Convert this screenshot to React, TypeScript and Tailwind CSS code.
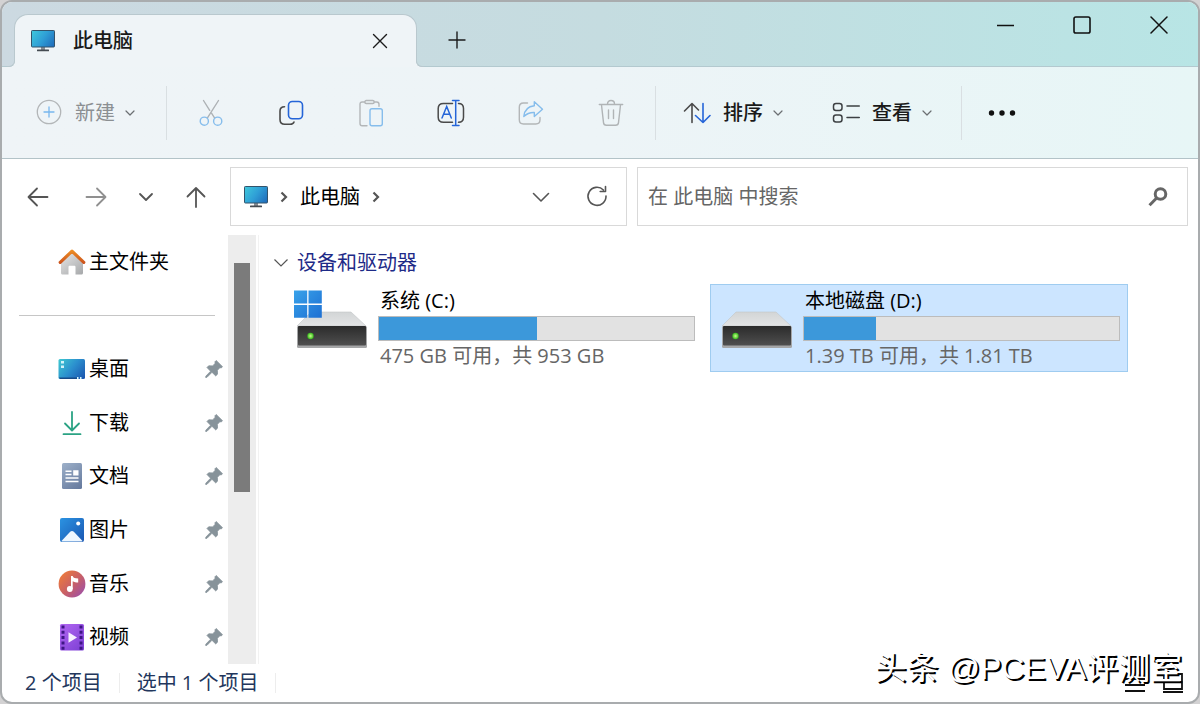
import type { ReactNode } from "react";

type IconProps = { className?: string };

const MonitorIcon = ({ className }: IconProps) => (
  <svg className={className} width="24" height="22" viewBox="0 0 24 22" fill="none">
    <defs>
      <linearGradient id="screen" x1="0" y1="0" x2="24" y2="17" gradientUnits="userSpaceOnUse">
        <stop stopColor="#40cbdc" />
        <stop offset="0.5" stopColor="#2f9fd6" />
        <stop offset="1" stopColor="#1d66b8" />
      </linearGradient>
    </defs>
    <rect x="10" y="17" width="4" height="3" fill="#8a8f94" />
    <rect x="6" y="19.5" width="12" height="1.8" rx="0.5" fill="#454b52" />
    <rect x="0.5" y="0.5" width="23" height="16.5" rx="0.8" fill="url(#screen)" stroke="#33536b" />
  </svg>
);

const ChevronDown = ({ className }: IconProps) => (
  <svg className={className} width="12" height="12" viewBox="0 0 12 12" fill="none" stroke="currentColor" strokeWidth="1.2" strokeLinecap="round" strokeLinejoin="round">
    <path d="M2 4l4 4 4-4" />
  </svg>
);

const ChevronRight = () => (
  <svg className="mx-[10px]" width="12" height="14" viewBox="0 0 12 14" fill="none" stroke="#555" strokeWidth="2.2">
    <path d="M3.500 2.500L8 7l-4.500 4.500" />
  </svg>
);

const NewIcon = () => (
  <svg width="28" height="28" viewBox="0 0 28 28" fill="none" strokeLinecap="round">
    <circle cx="14" cy="13" r="11.7" stroke="#b3b6b8" strokeWidth="1.3" />
    <path d="M14 8v10M9 13h10" stroke="#78b7ee" strokeWidth="1.3" />
  </svg>
);

const CutIcon = () => (
  <svg width="28" height="28" viewBox="0 0 28 28" fill="none" strokeWidth="1.4" strokeLinecap="round">
    <path d="M6.5 1.5l6.2 9.8M14.5 14.2l3.2 5M21.5 1.5L10.3 19.2" stroke="#aeb2b5" />
    <circle cx="7.3" cy="22.2" r="4.1" stroke="#86bdec" />
    <circle cx="20.7" cy="22.2" r="4.1" stroke="#86bdec" />
  </svg>
);

const CopyIcon = () => (
  <svg width="28" height="28" viewBox="0 0 28 28" fill="none" strokeWidth="1.6" strokeLinecap="round">
    <path d="M7.5 7.7C4.5 7.7 3 9.200 3 12v8.500c0 3.300 1.500 4.800 4.800 4.800h5.400c2 0 3.300-.9 3.800-2.300" stroke="#4a4a4a" />
    <rect x="11.500" y="2.500" width="14" height="17.300" rx="3.800" stroke="#2565d8" />
  </svg>
);

const PasteIcon = () => (
  <svg width="28" height="28" viewBox="0 0 28 28" fill="none" strokeWidth="1.4" strokeLinecap="round">
    <path d="M7.5 3H5.200C3.700 3 3 3.700 3 5.200v19.300c0 1.500.7 2.200 2.200 2.200H10M17.500 3h2.300c1.500 0 2.200.7 2.200 2.200v2" stroke="#b3b6b8" />
    <rect x="7.800" y="1.500" width="9.400" height="3" rx="1.500" stroke="#b3b6b8" />
    <rect x="13" y="9.700" width="12.300" height="17" rx="2" stroke="#86bdec" />
  </svg>
);

const RenameIcon = () => (
  <svg width="28" height="28" viewBox="0 0 28 28" fill="none" strokeWidth="1.5" strokeLinecap="round">
    <path d="M15.500 4.500H6.500C3 4.500 1.200 6.200 1.200 9.500v8.800c0 3.300 1.800 5 5.300 5h9M21.500 4.500c3.300 0 5 1.700 5 5v8.800c0 3.300-1.700 5-5 5" stroke="#4a4a4a" />
    <path d="M5 19l4.700-11.500L14.300 19M6.600 15.300h6.200M15.500 1.500h6.500M15.500 26.500h6.500M18.700 1.500v25" stroke="#2565d8" />
  </svg>
);

const ShareIcon = () => (
  <svg width="28" height="28" viewBox="0 0 28 28" fill="none" strokeWidth="1.4" strokeLinecap="round" strokeLinejoin="round">
    <path d="M10.500 4H6.500C3.800 4 2.300 5.500 2.300 8.200v12.600c0 2.700 1.500 4.200 4.200 4.200h12.300c2.700 0 4.200-1.500 4.200-4.200v-2.300" stroke="#b3b6b8" />
    <path d="M17.300 2.800l8.200 7.400-8.200 7.400v-4.100c-4.200-.2-7.600 1.200-10.500 4 .6-6 3.800-10 10.500-10.700V2.800z" stroke="#86bdec" />
  </svg>
);

const TrashIcon = () => (
  <svg width="28" height="28" viewBox="0 0 28 28" fill="none" stroke="#b0b4b6" strokeWidth="1.4" strokeLinecap="round" strokeLinejoin="round">
    <path d="M2.300 5.500h23.400M10.500 5c0-2.300 1.300-3.500 3.500-3.500s3.500 1.200 3.500 3.500M4.500 6l2 17.700c.2 1.700 1.200 2.600 2.900 2.600h9.200c1.700 0 2.700-.9 2.900-2.600l2-17.700M11.500 11v8.500M16.500 11v8.500" />
  </svg>
);

const SortIcon = () => (
  <svg width="28" height="28" viewBox="0 0 28 28" fill="none" strokeWidth="1.6" strokeLinecap="round" strokeLinejoin="round">
    <path d="M9 23.500V4.500M1.500 12L9 4.500l6.500 6.500" stroke="#4a4a4a" />
    <path d="M20 4.500v19M12.500 16.500l7.500 7 7-7" stroke="#2565d8" />
  </svg>
);

const ViewIcon = () => (
  <svg width="28" height="28" viewBox="0 0 28 28" fill="none" stroke="#3d4043" strokeWidth="1.5" strokeLinecap="round">
    <rect x="1.500" y="4.500" width="8.500" height="7" rx="2.500" />
    <rect x="1.500" y="16" width="8.500" height="7" rx="2.500" />
    <path d="M15 7h12.300M15 18.500h12.300" />
  </svg>
);

const HomeIcon = () => (
  <svg width="28" height="28" viewBox="0 0 28 28">
    <defs>
      <linearGradient id="wall" x1="4" y1="6" x2="22" y2="27" gradientUnits="userSpaceOnUse">
        <stop stopColor="#e4e4e4" />
        <stop offset="1" stopColor="#a9abad" />
      </linearGradient>
      <linearGradient id="roof" x1="0" y1="2" x2="0" y2="17" gradientUnits="userSpaceOnUse">
        <stop stopColor="#ee9025" />
        <stop offset="1" stopColor="#c74a1b" />
      </linearGradient>
    </defs>
    <path d="M3 12.500L14 3.500l11 9V25c0 .9-.6 1.500-1.500 1.500h-6V19c0-.8-.5-1.300-1.300-1.300h-4.400c-.8 0-1.300.5-1.300 1.300v7.500h-6C3.600 26.500 3 25.900 3 25z" fill="url(#wall)" />
    <path d="M2.200 14.300L14 3.200l11.800 11.100" fill="none" stroke="url(#roof)" strokeWidth="3.2" strokeLinecap="round" strokeLinejoin="round" />
  </svg>
);

const DesktopIcon = () => (
  <svg width="28" height="28" viewBox="0 0 28 28">
    <defs>
      <linearGradient id="desk" x1="1" y1="4" x2="26" y2="24" gradientUnits="userSpaceOnUse">
        <stop stopColor="#3fc8d1" />
        <stop offset="0.5" stopColor="#2b8fce" />
        <stop offset="1" stopColor="#1b55ae" />
      </linearGradient>
    </defs>
    <rect x="0.5" y="4" width="26.500" height="20" rx="1.5" fill="url(#desk)" />
    <path d="M1 22.500h18V24H2z" fill="#174a87" />
    <path d="M3 6h3v2.500H3zM3 10.500h3V13H3zM19 22h1.500v2H19zM22 22h1.500v2H22z" fill="#d3f4fa" />
  </svg>
);

const DownloadIcon = () => (
  <svg width="28" height="28" viewBox="0 0 28 28" fill="none" stroke="#2ba384" strokeWidth="1.8" strokeLinecap="round" strokeLinejoin="round">
    <path d="M14 3v18M7 14.500l7 7 7-7M5.500 25.200h17" />
  </svg>
);

const DocumentIcon = () => (
  <svg width="28" height="28" viewBox="0 0 28 28">
    <defs>
      <linearGradient id="doc" x1="4" y1="1" x2="24" y2="27" gradientUnits="userSpaceOnUse">
        <stop stopColor="#9db0c9" />
        <stop offset="1" stopColor="#64789c" />
      </linearGradient>
    </defs>
    <rect x="4" y="1" width="20" height="26" rx="1.5" fill="url(#doc)" />
    <path d="M7.500 8.500h6v1.600h-6zM7.500 11.700h6v1.600h-6zM15.200 8.200h5.300v5.300h-5.300zM7.500 15.200h13v1.600h-13zM7.500 18.700h13v1.600h-13z" fill="#fff" />
  </svg>
);

const PictureIcon = () => (
  <svg width="28" height="28" viewBox="0 0 28 28">
    <defs>
      <linearGradient id="pic" x1="2" y1="2" x2="26" y2="26" gradientUnits="userSpaceOnUse">
        <stop stopColor="#2b93e2" />
        <stop offset="1" stopColor="#1a57b2" />
      </linearGradient>
    </defs>
    <rect x="2" y="2" width="24" height="24" rx="2" fill="url(#pic)" />
    <path d="M3.500 25l8.700-9.200c1.100-1.100 2.500-1.100 3.600 0l8.700 9.200c-.4.4-1 .5-1.500.5H5c-.5 0-1.100-.1-1.500-.5z" fill="#eef7ff" />
    <circle cx="20.200" cy="7.500" r="2" fill="#fff" />
  </svg>
);

const MusicIcon = () => (
  <svg width="28" height="28" viewBox="0 0 28 28">
    <defs>
      <linearGradient id="disc" x1="3" y1="4" x2="25" y2="24" gradientUnits="userSpaceOnUse">
        <stop stopColor="#ec7a3d" />
        <stop offset="0.55" stopColor="#c75f68" />
        <stop offset="1" stopColor="#a151a3" />
      </linearGradient>
    </defs>
    <circle cx="14" cy="14" r="13.400" fill="url(#disc)" />
    <circle cx="11.800" cy="19" r="2.900" fill="#fff" />
    <path d="M13 6h1.700c.5 2 2.300 2.200 5.500 2.600v4c-2.200 0-4.100-.4-5.500-1.300V19H13z" fill="#fff" />
  </svg>
);

const VideoIcon = () => (
  <svg width="28" height="28" viewBox="0 0 28 28">
    <defs>
      <linearGradient id="film" x1="2" y1="1" x2="26" y2="27" gradientUnits="userSpaceOnUse">
        <stop stopColor="#b267f2" />
        <stop offset="1" stopColor="#7c3fd4" />
      </linearGradient>
    </defs>
    <rect x="2" y="1" width="24" height="26.500" rx="1.5" fill="url(#film)" />
    <path d="M5 2.500v25M23 2.500v25" stroke="#3f1685" strokeWidth="3" strokeDasharray="3 2.300" />
    <path d="M10.500 9.200v10.600l8.500-5.300z" fill="#f7f0ff" />
  </svg>
);

const PinIcon = () => (
  <svg width="18" height="18" viewBox="0 0 18 18" fill="#87939a">
    <path d="M11.200.5l6.300 6.200-1.300 1.200-1.300-.2-2.500 2.600.1 3.900-1.800 1.700-3.700-3.600L2 17.300.7 17.500l.1-1.300 4.800-5L2 7.500l1.700-1.700 4 .1L10.200 3.200l-.3-1.400z" stroke="#87939a" strokeWidth="0.8" strokeLinejoin="round" />
  </svg>
);

const DriveIcon = ({ system }: { system?: boolean }) => (
  <svg width="92" height="86" viewBox="0 0 92 86" className="shrink-0">
    <defs>
      <linearGradient id="lid" x1="0" y1="27" x2="0" y2="41" gradientUnits="userSpaceOnUse">
        <stop stopColor="#d2d5d6" />
        <stop offset="1" stopColor="#e3e4e5" />
      </linearGradient>
      <linearGradient id="front" x1="0" y1="41" x2="0" y2="61" gradientUnits="userSpaceOnUse">
        <stop stopColor="#2b2b2b" />
        <stop offset="1" stopColor="#505050" />
      </linearGradient>
      <linearGradient id="tiles" x1="8" y1="5" x2="36" y2="33" gradientUnits="userSpaceOnUse">
        <stop stopColor="#39a3ea" />
        <stop offset="1" stopColor="#1d6fd3" />
      </linearGradient>
      <radialGradient id="led">
        <stop stopColor="#c8ff8a" />
        <stop offset="1" stopColor="#35b81c" />
      </radialGradient>
    </defs>
    <path d="M25 27h40l15 14H11z" fill="url(#lid)" stroke="#c3c6c7" strokeWidth="0.6" />
    <rect x="11" y="41" width="70" height="22" rx="1.5" fill="#a5a6a7" />
    <rect x="12" y="41" width="68" height="19.500" rx="1" fill="url(#front)" />
    <circle cx="24.500" cy="51" r="3.200" fill="url(#led)" />
    {system && (
      <path d="M8 5.500h13.200v13H8zM22.500 5.500h13.300v13H22.500zM8 20h13.200v12.700H8zM22.500 20h13.300v12.700H22.500z" fill="url(#tiles)" />
    )}
  </svg>
);

const Divider = () => <div className="w-px h-[54px] bg-[#d9dfe2]" />;

const MenuButton = ({ icon, label, className }: { icon: ReactNode; label: string; className: string }) => (
  <button className={`flex items-center ${className}`}>
    {icon}
    <span className="ml-3 mr-[9px]">{label}</span>
    <ChevronDown className="text-[#6b6f72]" />
  </button>
);

const tools = [
  { label: "剪切", icon: <CutIcon />, disabled: true },
  { label: "复制", icon: <CopyIcon /> },
  { label: "粘贴", icon: <PasteIcon />, disabled: true },
  { label: "重命名", icon: <RenameIcon /> },
  { label: "共享", icon: <ShareIcon />, disabled: true },
  { label: "删除", icon: <TrashIcon />, disabled: true },
];

const places = [
  { name: "桌面", icon: <DesktopIcon /> },
  { name: "下载", icon: <DownloadIcon /> },
  { name: "文档", icon: <DocumentIcon /> },
  { name: "图片", icon: <PictureIcon /> },
  { name: "音乐", icon: <MusicIcon /> },
  { name: "视频", icon: <VideoIcon /> },
];

const drives = [
  { name: "系统 (C:)", info: "475 GB 可用，共 953 GB", used: 50, system: true },
  { name: "本地磁盘 (D:)", info: "1.39 TB 可用，共 1.81 TB", used: 23, selected: true },
];

const TitleBar = () => (
  <div className="flex h-[65px] pl-3 pt-3 border-b border-[#b3c9cf] bg-linear-to-r from-[#ccd9e1] via-[#c5dce0] to-[#b8e5e5]">
    <div className="relative -mb-px flex items-center w-[403px] pl-4 pr-6 rounded-t-[14px] border border-b-0 border-[#b9c8ce] bg-[#eff4f7]">
      <span className="absolute -left-2 bottom-0 size-2 rounded-br-[6px] border-b border-r border-[#b9c8ce] shadow-[2px_2px_0_0_#eff4f7]" />
      <span className="absolute -right-2 bottom-0 size-2 rounded-bl-[6px] border-b border-l border-[#b9c8ce] shadow-[-2px_2px_0_0_#eff4f7]" />
      <MonitorIcon />
      <span className="ml-[18px] flex-1 font-medium text-[#1a1a1a]">此电脑</span>
      <button aria-label="关闭标签页" className="p-1">
        <svg width="16" height="16" viewBox="0 0 16 16" stroke="#1b1b1b" strokeWidth="1.4" strokeLinecap="round">
          <path d="M1.500 1.500l13 13M14.500 1.500l-13 13" />
        </svg>
      </button>
    </div>
    <button aria-label="新标签页" className="w-20 flex items-center justify-center">
      <svg width="18" height="18" viewBox="0 0 18 18" stroke="#1b1b1b" strokeWidth="1.4" strokeLinecap="round">
        <path d="M9 1v16M1 9h16" />
      </svg>
    </button>
    <div className="-mt-3 ml-auto mr-px flex h-[45px]">
      <button aria-label="最小化" className="w-[77px] flex items-center justify-center">
        <svg width="18" height="18" viewBox="0 0 18 18" stroke="#111" strokeWidth="1.6">
          <path d="M1 9.500h17" />
        </svg>
      </button>
      <button aria-label="最大化" className="w-[77px] flex items-center justify-center">
        <svg width="18" height="18" viewBox="0 0 18 18" fill="none" stroke="#111" strokeWidth="1.6">
          <rect x="1" y="1" width="16" height="16" rx="1.8" />
        </svg>
      </button>
      <button aria-label="关闭" className="w-[77px] flex items-center justify-center">
        <svg width="18" height="18" viewBox="0 0 18 18" stroke="#111" strokeWidth="1.5" strokeLinecap="round">
          <path d="M1 1l16 16M17 1L1 17" />
        </svg>
      </button>
    </div>
  </div>
);

const Toolbar = () => (
  <div className="flex items-center h-[92px] pl-[33px] border-b border-[#b3c3c8] bg-linear-to-r from-[#eff4f7] via-[#edf4f7] to-[#e7f6f6] text-[#1a1a1a]">
    <MenuButton icon={<NewIcon />} label="新建" className="pr-[30px] text-[#8b8f92]" />
    <Divider />
    <div className="flex px-1">
      {tools.map((tool) => (
        <button key={tool.label} aria-label={tool.label} disabled={tool.disabled} className="w-20 h-12 flex items-center justify-center">
          {tool.icon}
        </button>
      ))}
    </div>
    <Divider />
    <MenuButton icon={<SortIcon />} label="排序" className="pl-[27px] pr-6 font-medium" />
    <MenuButton icon={<ViewIcon />} label="查看" className="pl-6 pr-7 font-medium" />
    <Divider />
    <button aria-label="更多" className="w-20 h-12 flex items-center justify-center">
      <svg width="28" height="6" viewBox="0 0 28 6" fill="#111">
        <circle cx="3.500" cy="3" r="2.700" />
        <circle cx="14" cy="3" r="2.700" />
        <circle cx="24.500" cy="3" r="2.700" />
      </svg>
    </button>
  </div>
);

const NavButton = ({ label, path, className }: { label: string; path: string; className: string }) => (
  <button aria-label={label} className={`flex justify-center ${className}`}>
    <svg width="24" height="24" viewBox="0 0 24 24" fill="none" stroke="currentColor" strokeWidth="1.8" strokeLinecap="round" strokeLinejoin="round">
      <path d={path} />
    </svg>
  </button>
);

const AddressRow = () => (
  <div className="flex pt-2 pb-[9px] pr-[10px]">
    <div className="flex items-center w-[228px] pl-[7px] text-[#555]">
      <NavButton label="后退" className="w-[58px]" path="M21.500 12H3M11 3.500L2.500 12l8.500 8.500" />
      <NavButton label="前进" className="w-[58px] text-[#909090]" path="M2.500 12H21M13 3.500l8.500 8.500-8.500 8.500" />
      <NavButton label="最近" className="w-[42px]" path="M6 9l6 6 6-6" />
      <NavButton label="向上" className="w-[58px]" path="M12 22V3M3.500 11.500L12 3l8.500 8.500" />
    </div>
    <div className="flex items-center w-[397px] h-[59px] pl-[13px] pr-[17px] border border-[#d9d9d9]">
      <MonitorIcon />
      <ChevronRight />
      <a href="#" className="text-black">此电脑</a>
      <ChevronRight />
      <button aria-label="历史记录" className="ml-auto mr-8">
        <svg width="24" height="24" viewBox="0 0 24 24" fill="none" stroke="#555" strokeWidth="1.6" strokeLinecap="round" strokeLinejoin="round">
          <path d="M4.500 8.500l7.500 7.500 7.500-7.500" />
        </svg>
      </button>
      <button aria-label="刷新">
        <svg width="24" height="24" viewBox="0 0 24 24" fill="none" stroke="#555" strokeWidth="1.6" strokeLinecap="round" strokeLinejoin="round">
          <path d="M21 11a9 9 0 1 1-2.600-6M20.500 1.500v5h-5.300" />
        </svg>
      </button>
    </div>
    <label className="flex flex-1 items-center h-[59px] ml-[10px] pl-[10px] pr-[18px] border border-[#d9d9d9]">
      <input type="text" aria-label="搜索" placeholder="在 此电脑 中搜索" className="flex-1 min-w-0 outline-none placeholder:text-[#666]" />
      <svg width="22" height="22" viewBox="0 0 22 22" fill="none" stroke="#666" strokeWidth="3">
        <circle cx="13.500" cy="8" r="5.300" />
        <path d="M9.700 12L2.500 19.200" />
      </svg>
    </label>
  </div>
);

const Sidebar = () => (
  <nav className="flex w-[254px] shrink-0">
    <div className="flex-1 flex flex-col">
      <a href="#" className="flex flex-1 items-center pl-14 text-black">
        <HomeIcon />
        <span className="ml-[3px]">主文件夹</span>
      </a>
      <div className="flex flex-1 items-center pl-[17px] pr-[13px]">
        <hr className="flex-1 border-[#c6c6c6]" />
      </div>
      {places.map((place) => (
        <a key={place.name} href="#" className="flex flex-1 items-center pl-14 pr-[5px] text-black">
          {place.icon}
          <span className="ml-[3px] flex-1">{place.name}</span>
          <PinIcon />
        </a>
      ))}
    </div>
    <div className="w-7 pt-7 px-[6px] bg-[#ededed]">
      <div className="h-[229px] bg-[#7b7b7b]" />
    </div>
  </nav>
);

const Drive = ({ drive }: { drive: (typeof drives)[number] }) => (
  <button
    className={`flex w-[418px] pr-[7px] border text-left ${
      drive.selected ? "border-[#9fccf0] bg-[#cce5ff]" : "border-transparent"
    }`}
  >
    <DriveIcon system={drive.system} />
    <span className="flex-1">
      <span className="block h-[31px] pl-[2px] leading-8 text-black">{drive.name}</span>
      <span className="block h-[25px] border border-[#bcbcbc] bg-[#e2e2e2]">
        <span className="block h-full bg-[#3c98da]" style={{ width: `${drive.used}%` }} />
      </span>
      <span className="block h-[30px] pl-[2px] leading-[30px] text-[#666]">{drive.info}</span>
    </span>
  </button>
);

const StatusBar = () => (
  <footer className="flex items-center h-[38px] pl-[23px] text-[#22365c]">
    <span>2 个项目</span>
    <span className="mx-[17px] w-px h-5 bg-[#ededed]" />
    <span>选中 1 个项目</span>
    <span className="mx-[17px] w-px h-5 bg-[#ededed]" />
    <div className="ml-auto mr-[14px] flex gap-4">
      <button aria-label="详细信息">
        <svg width="22" height="22" viewBox="0 0 22 22" stroke="#111" strokeWidth="1.8">
          <path d="M1 7h20M1 13h20M1 19h20" />
        </svg>
      </button>
      <button aria-label="大图标">
        <svg width="22" height="22" viewBox="0 0 22 22" fill="none" stroke="#111" strokeWidth="1.8">
          <path d="M2 2h18v15H2zM1 20h20" />
        </svg>
      </button>
    </div>
  </footer>
);

export default function App() {
  return (
    <div className="min-h-screen flex bg-[#d3d2d3] font-['Open_Sans','Noto_Sans_CJK_SC',sans-serif] text-[20px] leading-7">
      <div className="relative flex flex-1 flex-col overflow-hidden rounded-xl border-2 border-[#a9acae] bg-white">
        <TitleBar />
        <Toolbar />
        <AddressRow />
        <div className="flex flex-1">
          <Sidebar />
          <main className="flex-1 ml-[2px] pl-[15px] pt-[14px] border-l border-[#f2f2f2]">
            <h2 className="flex items-center h-7 text-[#1e2a87]">
              <svg className="mr-[9px]" width="14" height="14" viewBox="0 0 14 14" fill="none" stroke="#555" strokeWidth="1.2">
                <path d="M0.500 3.500l6.500 6.500 6.500-6.500" />
              </svg>
              设备和驱动器
            </h2>
            <div className="flex flex-wrap gap-[7px] mt-[7px] pl-[11px]">
              {drives.map((drive) => (
                <Drive key={drive.name} drive={drive} />
              ))}
            </div>
          </main>
        </div>
        <StatusBar />
        <p className="absolute right-4 bottom-4 whitespace-nowrap font-['Liberation_Sans','Noto_Sans_CJK_SC',sans-serif] text-[32px] leading-9 text-white [text-shadow:2px_2px_0_#000]">
          头条 @PCEVA评测室
        </p>
      </div>
    </div>
  );
}
